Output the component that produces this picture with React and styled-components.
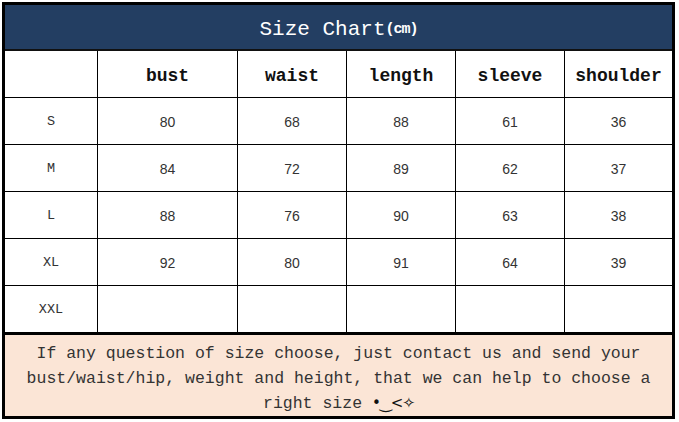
import React from "react"
import styled, { createGlobalStyle } from "styled-components"

const Global = createGlobalStyle`
body{margin:0;background:#fff;}
*{box-sizing:border-box;}
`
const Page = styled.div`
padding:2px 0 0 2px;
width:679px;
height:422px;
`
const Chart = styled.div`
width:673px;
border:3px solid #000;
`
const Title = styled.div`
height:46px;
background:#233e62;
color:#fff;
display:flex;
align-items:center;
justify-content:center;
font-family:"Liberation Mono",monospace;
font-size:21px;
padding-top:5px;
border-bottom:2px solid #111;
`
const Unit = styled.span`
font-size:15px;
font-weight:bold;
letter-spacing:-1px;
`
const Grid = styled.div`
display:grid;
grid-template-columns:92px 139px 108px 108px 108px 107px;
grid-auto-rows:46px;
gap:1px;
background:#000;
`
const Cell = styled.div`
background:#fff;
display:flex;
align-items:center;
justify-content:center;
color:${p => p.head ? "#111" : "#333"};
font-family:${p => p.num ? '"Liberation Sans",Arial,sans-serif' : '"Liberation Mono",monospace'};
font-size:${p => p.head ? "18px" : p.num ? "14px" : "13.5px"};
font-weight:${p => p.head ? "bold" : "normal"};
padding-top:${p => p.head ? "4px" : "1px"};
`
const Footer = styled.div`
border-top:3px solid #000;
background:#fbe5d6;
height:84px;
padding-top:6px;
font-family:"Liberation Mono",monospace;
font-size:16.5px;
line-height:25px;
color:#333;
text-align:center;
`
const Line = styled.div`
white-space:nowrap;
`
const Face = styled.span`
font-family:"DejaVu Sans",sans-serif;
font-size:15px;
color:#111;
letter-spacing:-1px;
`

const heads = ["", "bust", "waist", "length", "sleeve", "shoulder"]
const rows = [
    ["S", "80", "68", "88", "61", "36"],
    ["M", "84", "72", "89", "62", "37"],
    ["L", "88", "76", "90", "63", "38"],
    ["XL", "92", "80", "91", "64", "39"],
    ["XXL", "", "", "", "", ""],
]

const App = () => {
    return (
        <Page>
            <Global />
            <Chart>
                <Title>Size Chart<Unit>(cm)</Unit></Title>
                <Grid>
                    {heads.map((h, i) => <Cell head key={"h" + i}>{h}</Cell>)}
                    {rows.map(r => r.map((v, i) =>
                        <Cell key={r[0] + i} num={i > 0}>{v}</Cell>
                    ))}
                </Grid>
                <Footer>
                    <Line>If any question of size choose, just contact us and send your</Line>
                    <Line>bust/waist/hip, weight and height, that we can help to choose a</Line>
                    <Line>right size <Face>•‿&lt;✧</Face></Line>
                </Footer>
            </Chart>
        </Page>
    )
}
export default App
